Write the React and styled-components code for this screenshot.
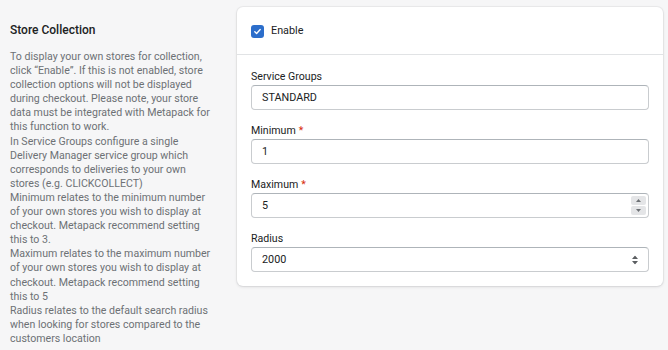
import styled, { createGlobalStyle } from "styled-components";

const GlobalStyle = createGlobalStyle`
  body {
    margin: 0;
    background: #f6f6f7;
    font-family: Roboto, "Noto Sans", sans-serif;
    color: #202223;
  }
`;

const Page = styled.div`
  display: flex;
  gap: 22px;
  padding: 7px 5px 0 10px;
  height: 343px;
  overflow: hidden;
`;

const Aside = styled.div`
  width: 205px;
  flex-shrink: 0;
  padding-top: 15px;
`;

const Heading = styled.h2`
  margin: 0 0 12px;
  font-size: 12px;
  font-weight: 500;
  line-height: 16px;
  color: #202223;
`;

const Text = styled.p`
  margin: 0;
  font-size: 10.6px;
  line-height: 14.1px;
  color: #6d7175;
`;

const Card = styled.div`
  flex: 1;
  align-self: flex-start;
  background: #fff;
  border-radius: 6px;
  box-shadow: 0 0 0 1px rgba(63, 63, 68, 0.05), 0 1px 3px rgba(63, 63, 68, 0.15);
`;

const Section = styled.div`
  padding: ${({ top }) => (top ? "16px 14px 15px" : "15px 14px 14px")};
  border-top: ${({ top }) => (top ? "none" : "1px solid #e1e3e5")};
`;

const CheckRow = styled.label`
  display: flex;
  align-items: center;
  gap: 7px;
  font-size: 10.8px;
  line-height: 16px;
`;

const Box = styled.span`
  width: 13px;
  height: 13px;
  border-radius: 3px;
  background: #2c6ecb;
  display: flex;
  align-items: center;
  justify-content: center;
`;

const Field = styled.div`
  margin-bottom: ${({ last }) => (last ? "0" : "14px")};
`;

const Label = styled.div`
  font-size: 10.6px;
  line-height: 14px;
  margin-bottom: 1px;
  color: #202223;
`;

const Required = styled.span`
  color: #d72c0d;
  margin-left: 3px;
`;

const InputWrap = styled.div`
  position: relative;
  height: 25px;
  box-sizing: border-box;
  border: 1px solid #c9cccf;
  border-top-color: #aeb4b9;
  border-radius: 4px;
  display: flex;
  align-items: center;
  padding: 0 10px;
  font-size: 10.8px;
  color: #202223;
`;

const Spinner = styled.div`
  position: absolute;
  right: 2px;
  top: 2px;
  bottom: 2px;
  width: 15px;
  display: flex;
  flex-direction: column;
  gap: 1px;
`;

const SpinButton = styled.div`
  flex: 1;
  background: #e4e5e7;
  border-radius: 2px;
  display: flex;
  align-items: center;
  justify-content: center;
`;

const SelectArrows = styled.svg`
  position: absolute;
  right: 10px;
  top: 50%;
  transform: translateY(-50%);
`;

const Caret = ({ down }) => (
  <svg width="5" height="3" viewBox="0 0 5 3">
    <path d={down ? "M0 0h5L2.5 3z" : "M0 3h5L2.5 0z"} fill="#6d7175" />
  </svg>
);

const descriptions = [
  "To display your own stores for collection, click “Enable”. If this is not enabled, store collection options will not be displayed during checkout. Please note, your store data must be integrated with Metapack for this function to work.",
  "In Service Groups configure a single Delivery Manager service group which corresponds to deliveries to your own stores (e.g. CLICKCOLLECT)",
  "Minimum relates to the minimum number of your own stores you wish to display at checkout. Metapack recommend setting this to 3.",
  "Maximum relates to the maximum number of your own stores you wish to display at checkout. Metapack recommend setting this to 5",
  "Radius relates to the default search radius when looking for stores compared to the customers location",
];

export default function App() {
  return (
    <>
      <GlobalStyle />
      <Page>
        <Aside>
          <Heading>Store Collection</Heading>
          {descriptions.map((d, i) => (
            <Text key={i}>{d}</Text>
          ))}
        </Aside>
        <Card>
          <Section top>
            <CheckRow>
              <Box>
                <svg width="9" height="9" viewBox="0 0 10 10">
                  <path d="M2 5.2l2 2 4-4.4" stroke="#fff" strokeWidth="1.5" fill="none" strokeLinecap="round" strokeLinejoin="round" />
                </svg>
              </Box>
              Enable
            </CheckRow>
          </Section>
          <Section>
            <Field>
              <Label>Service Groups</Label>
              <InputWrap>STANDARD</InputWrap>
            </Field>
            <Field>
              <Label>
                Minimum<Required>*</Required>
              </Label>
              <InputWrap>1</InputWrap>
            </Field>
            <Field>
              <Label>
                Maximum<Required>*</Required>
              </Label>
              <InputWrap>
                5
                <Spinner>
                  <SpinButton>
                    <Caret />
                  </SpinButton>
                  <SpinButton>
                    <Caret down />
                  </SpinButton>
                </Spinner>
              </InputWrap>
            </Field>
            <Field last>
              <Label>Radius</Label>
              <InputWrap>
                2000
                <SelectArrows width="6" height="9" viewBox="0 0 6 9">
                  <path d="M0 3.5h6L3 0z M0 5.5h6L3 9z" fill="#5c5f62" />
                </SelectArrows>
              </InputWrap>
            </Field>
          </Section>
        </Card>
      </Page>
    </>
  );
}
